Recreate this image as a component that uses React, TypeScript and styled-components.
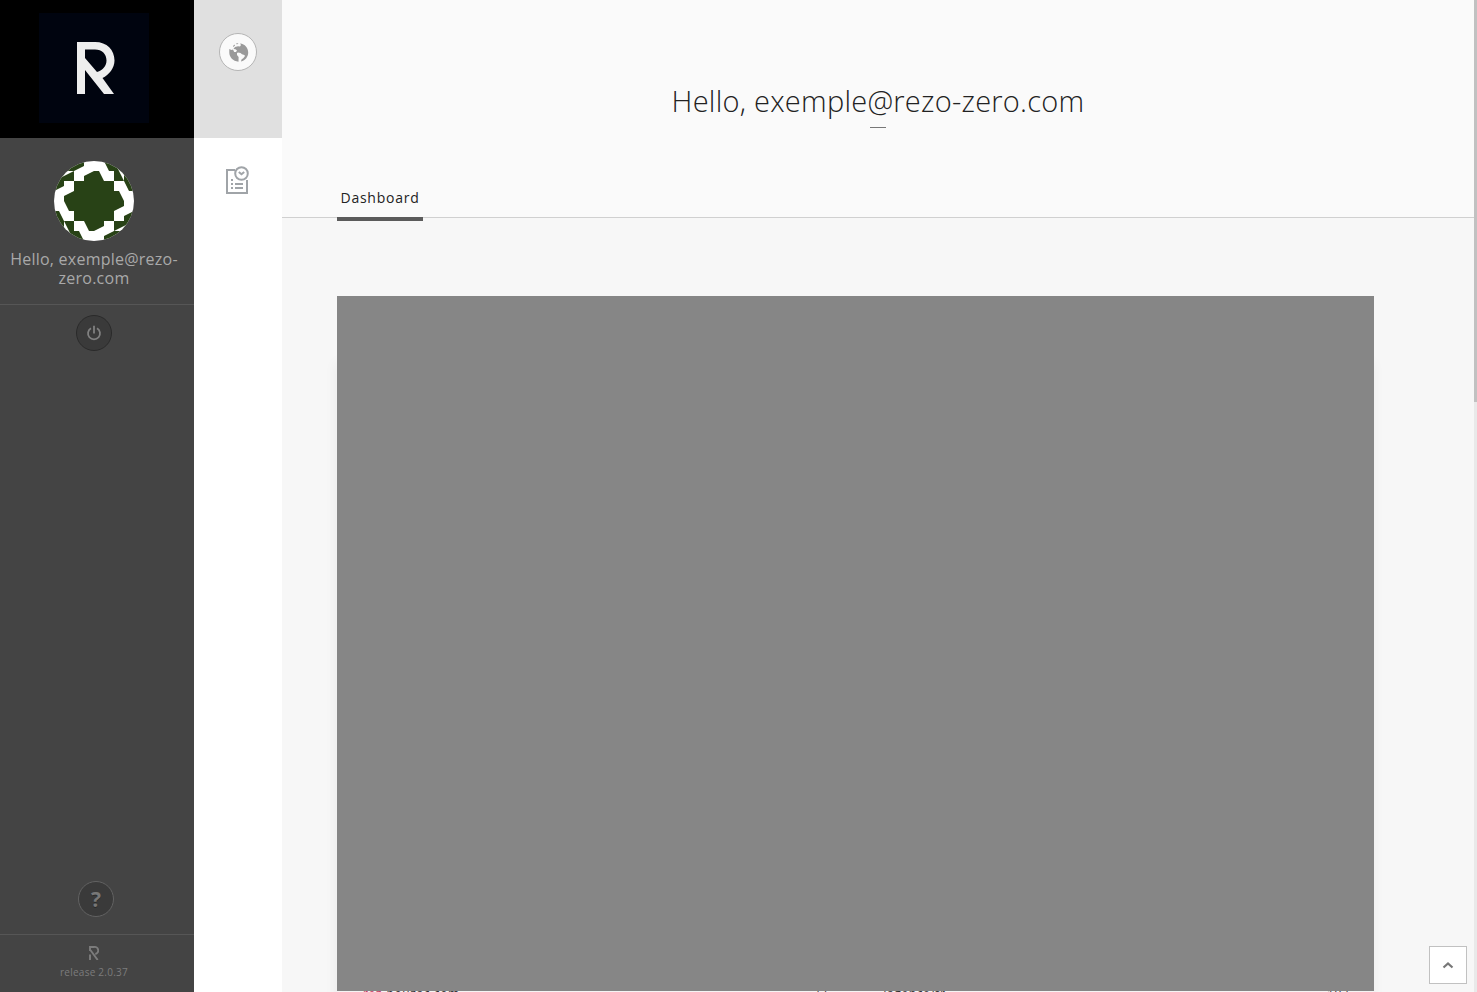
import React from "react";
import styled, { createGlobalStyle } from "styled-components";

const GlobalStyle = createGlobalStyle`
  * { box-sizing: border-box; }
  html, body { margin: 0; padding: 0; overflow: hidden; }
  body { font-family: "Open Sans", "Noto Sans", sans-serif; }
`;

const Page = styled.div`
  position: relative;
  display: flex;
  width: 1477px;
  height: 992px;
  overflow: hidden;
  background: #f7f7f7;
`;

const UserPanel = styled.aside`
  display: flex;
  flex-direction: column;
  width: 194px;
  background: #444;
`;

const LogoArea = styled.div`
  height: 138px;
  padding: 13px 0 0 39px;
  background: #000;
`;

const LogoTile = styled.div`
  width: 110px;
  height: 110px;
  background: #00040f;
  svg { display: block; }
`;

const Profile = styled.div`
  display: flex;
  flex-direction: column;
  align-items: center;
  height: 167px;
  padding: 23px 6px 0 0;
  border-bottom: 1px solid #565656;
`;

const Avatar = styled.svg`
  display: block;
  width: 80px;
  height: 80px;
  border-radius: 50%;
  background: #fff;
`;

const Greeting = styled.p`
  width: 180px;
  margin: 9px 0 0;
  color: #a9a9a9;
  font-size: 16px;
  line-height: 19px;
  letter-spacing: 0.24px;
  text-align: center;
`;

const RoundButton = styled.button<{ $border: string; $fill: string }>`
  display: flex;
  align-items: center;
  justify-content: center;
  width: 36px;
  height: 36px;
  padding: 0;
  border: 1px solid ${(p) => p.$border};
  border-radius: 50%;
  background: ${(p) => p.$fill};
`;

const LogoutRow = styled.div`
  flex: 1;
  padding: 10px 0 0 76px;
`;

const HelpRow = styled.div`
  height: 53px;
  padding-left: 78px;
`;

const QuestionMark = styled.span`
  color: #777;
  font: 700 21px/34px "Open Sans", sans-serif;
  text-shadow: 0 1px 0 #292929;
`;

const Release = styled.footer`
  display: flex;
  flex-direction: column;
  align-items: center;
  height: 58px;
  padding: 11px 6px 0 0;
  border-top: 1px solid #565656;
  color: #7c7c7c;
  font-size: 10px;
  line-height: 14px;
  letter-spacing: 0.25px;
  svg { display: block; margin-bottom: 5px; }
`;

const NavPanel = styled.nav`
  width: 88px;
  background: #fff;
`;

const SiteArea = styled.div`
  height: 138px;
  padding: 33px 0 0 25px;
  background: #e0e0e0;
`;

const SiteButton = styled(RoundButton)`
  width: 38px;
  height: 38px;
`;

const NavItem = styled.div`
  padding: 27px 0 0 31px;
  svg { display: block; }
`;

const Main = styled.main`
  display: flex;
  flex-direction: column;
  width: 1192px;
`;

const Header = styled.header`
  display: flex;
  flex-direction: column;
  align-items: center;
  height: 218px;
  border-bottom: 1px solid #d0d0d0;
  background: #fafafa;
`;

const Title = styled.h1`
  flex: none;
  height: 46px;
  margin: 81px 0 0;
  color: #222;
  font-size: 29px;
  font-weight: 300;
  line-height: 40px;
  letter-spacing: 0.25px;
  white-space: nowrap;
`;

const TitleRule = styled.div`
  flex: none;
  width: 16px;
  height: 1px;
  background: #777;
`;

const Tab = styled.div`
  align-self: flex-start;
  flex: none;
  width: 86px;
  height: 36px;
  margin: 57px 0 0 55px;
  border-bottom: 4px solid #5b5b5b;
  color: #222;
  font-size: 14px;
  line-height: 26px;
  letter-spacing: 0.75px;
  text-align: center;
`;

const Panel = styled.section`
  width: 1037px;
  margin: 78px 0 0 55px;
  box-shadow: -1px 66px 12px rgba(0, 0, 0, 0.05);
`;

const Placeholder = styled.div`
  height: 695px;
  background: #868686;
`;

const StatsStrip = styled.div`
  display: grid;
  grid-template-columns: 26px 450px 33px 36px 445px 47px;
  height: 1px;
  overflow: hidden;
  background: #f4f4f4;
`;

const StatText = styled.span`
  margin-top: -5px;
  color: #333;
  font-size: 12px;
  line-height: 16px;
  letter-spacing: 0.6px;
`;

const StatAccent = styled.span`
  color: #c8325f;
`;

const ScrollTrack = styled.div`
  width: 3px;
  background: #e9e9e9;
`;

const ScrollThumb = styled.div`
  height: 402px;
  background: #c1c1c1;
`;

const BackToTop = styled.button`
  position: absolute;
  right: 10px;
  bottom: 8px;
  display: flex;
  align-items: center;
  justify-content: center;
  width: 38px;
  height: 38px;
  padding: 0;
  border: 1px solid #c1c1c1;
  background: #fff;
`;

const Brand = () => (
  <svg width="110" height="110" viewBox="0 0 110 110">
    <path
      fill="#eee"
      fillRule="evenodd"
      d="M38 29H56C68 29 75.500 37 75.500 47.500C75.500 55 70 62 63.500 65L75 81H65L46 57V81H38ZM46 36.500V45L58 59C64 57 67.500 53 67.500 47.500C67.500 41 63 36.500 56 36.500Z"
    />
  </svg>
);

const Identicon = () => (
  <Avatar viewBox="0 0 80 80">
    {[0, 90, 180, 270].map((turn) => (
      <g key={turn} transform={`rotate(${turn} 40 40)`}>
        <path fill="#284216" d="M0 0H30V5L20 10V20H10V25L0 30Z" />
        <path fill="#fff" d="M0 10H20L0 20Z" />
        <path fill="#284216" d="M30 21V15L40 10H45L50 20V21Z" />
      </g>
    ))}
    <rect fill="#284216" x="20" y="20" width="40" height="40" />
  </Avatar>
);

export default function App() {
  return (
    <Page>
      <GlobalStyle />
      <UserPanel>
        <LogoArea><LogoTile><Brand /></LogoTile></LogoArea>
        <Profile>
          <Identicon />
          <Greeting>Hello, exemple@rezo-<br />zero.com</Greeting>
        </Profile>
        <LogoutRow>
          <RoundButton $border="#2a2a2a" $fill="#3a3a3a" aria-label="Log out">
            <svg width="16" height="16" viewBox="0 0 16 16" fill="none" stroke="#808080" strokeWidth="1.8">
              <path d="M8 .8V8.500M5 3.200A6 6 0 1 0 11 3.200" />
            </svg>
          </RoundButton>
        </LogoutRow>
        <HelpRow>
          <RoundButton $border="#626262" $fill="#3a3a3a"><QuestionMark>?</QuestionMark></RoundButton>
        </HelpRow>
        <Release>
          <svg width="10" height="14" viewBox="0 0 10 14" fill="none" stroke="#7c7c7c" strokeWidth="1.9">
            <path d="M1 5V1H5A3.500 3.500 0 0 1 6.300 8M1 3.500L8.700 14M1 8.500V14" />
          </svg>
          release 2.0.37
        </Release>
      </UserPanel>
      <NavPanel>
        <SiteArea>
          <SiteButton $border="#b5b5b5" $fill="#fafafa" aria-label="Website">
            <svg width="22" height="22" viewBox="0 0 22 22" fill="#999">
              <path d="M2.300 8L4.500 9L6 8.500L7.200 11H9L10 9.500L8.500 8.300L6.500 8L8 6L11 5.200L13 5.600L14 4L13 2.600C18 3 21.200 7 21.200 11.500C21.200 15.500 18.500 19.500 14 20.600L14.500 18.500L16.500 17L18 15L17.300 14L15 13.300L13.500 12L11 11.500L10 12V14L11.600 16L11.500 20.700C6 20.300 2.300 16 2.300 11.500Z" />
              <path d="M9 2.500L11.500 2L10 3.500ZM6 5L7.500 3.500L8 4.500L6.500 6Z" />
            </svg>
          </SiteButton>
        </SiteArea>
        <NavItem>
          <svg width="25" height="30" viewBox="0 0 25 30" fill="none" stroke="#a0a4a8" strokeWidth="2">
            <path d="M10 5H2V28H22V15M6 15H8M6 19H8M6 23H8M10 19H18M10 23H18" />
            <circle cx="16.5" cy="8.5" r="6.3" />
            <path d="M13.800 7L16.500 9.300L19.200 7" />
          </svg>
        </NavItem>
      </NavPanel>
      <Main>
        <Header>
          <Title>Hello, exemple@rezo-zero.com</Title>
          <TitleRule />
          <Tab>Dashboard</Tab>
        </Header>
        <Panel>
          <Placeholder />
          <StatsStrip>
            <span />
            <StatText><StatAccent>rez</StatAccent>-pouzac.com</StatText>
            <StatText>77</StatText>
            <span />
            <StatText>/agence/fr</StatText>
            <StatText>107</StatText>
          </StatsStrip>
        </Panel>
      </Main>
      <ScrollTrack><ScrollThumb /></ScrollTrack>
      <BackToTop aria-label="Back to top">
        <svg width="12" height="8" viewBox="0 0 12 8" fill="none" stroke="#777" strokeWidth="2.2">
          <path d="M1.500 6.500L6 2.500L10.500 6.500" />
        </svg>
      </BackToTop>
    </Page>
  );
}
